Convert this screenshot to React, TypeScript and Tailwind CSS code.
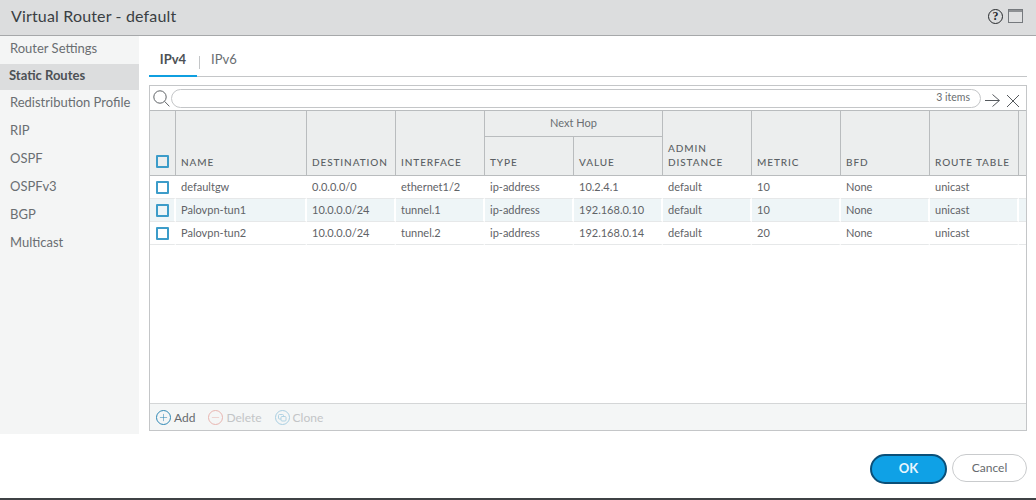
import { Plus, Minus } from "lucide-react";

const navItems = [
  "Router Settings",
  "Static Routes",
  "Redistribution Profile",
  "RIP",
  "OSPF",
  "OSPFv3",
  "BGP",
  "Multicast",
];

const routes = [
  { name: "defaultgw", dest: "0.0.0.0/0", iface: "ethernet1/2", value: "10.2.4.1", metric: "10" },
  { name: "Palovpn-tun1", dest: "10.0.0.0/24", iface: "tunnel.1", value: "192.168.0.10", metric: "10" },
  { name: "Palovpn-tun2", dest: "10.0.0.0/24", iface: "tunnel.2", value: "192.168.0.14", metric: "20" },
];

const th = "border-r border-b border-[#b9bcbe] bg-[#eceeee] px-[5px] pb-[6px] align-bottom text-left text-[10px] leading-[14px] font-medium tracking-[0.09em] text-[#5a5f63]";
const td = "border-r-2 border-b border-r-white border-b-[#e6e8e9] px-[5px] text-[11px] text-[#5f6367] whitespace-nowrap";

function Checkbox() {
  return <div className="mx-auto h-[13px] w-[13px] rounded-[1px] border-2 border-[#3c9cc9] bg-transparent" />;
}

function CircleIcon({ color, children }: { color: string; children: React.ReactNode }) {
  return (
    <span
      className="flex h-[15px] w-[15px] items-center justify-center rounded-full border"
      style={{ borderColor: color, color }}
    >
      {children}
    </span>
  );
}

export default function App() {
  return (
    <div className="flex h-[500px] w-[1036px] flex-col overflow-hidden bg-white font-['Lato','Open_Sans',sans-serif]">
      <header className="flex h-[36px] shrink-0 items-center justify-between border-b border-[#a6a8aa] bg-[#dcddde] pr-[13px] pb-[3px] pl-[11px]">
        <h1 className="text-[16px] tracking-[0.01em] text-[#3a3f43]">Virtual Router - default</h1>
        <div className="flex items-center gap-[5px]">
          <span className="flex h-[15px] w-[15px] items-center justify-center rounded-full border-[1.5px] border-[#26292c] font-['Liberation_Serif',serif] text-[12px] leading-none font-bold text-[#26292c]">
            ?
          </span>
          <svg width="15" height="14" viewBox="0 0 15 14" fill="none">
            <rect x="0.5" y="0.5" width="14" height="13" fill="#dfe0e1" stroke="#75797d" />
            <rect x="1" y="1" width="13" height="2" fill="#8e9194" />
          </svg>
        </div>
      </header>

      <div className="flex h-[398px] shrink-0">
        <nav className="flex w-[139px] shrink-0 flex-col bg-[#f4f5f5] text-[13px] text-[#6a6e72]">
          {navItems.map((item, idx) =>
            idx === 1 ? (
              <div key={item} className="flex h-[26px] items-center bg-[#dcddde] pb-[2px] pl-[9px] font-bold text-[#4d5155]">
                {item}
              </div>
            ) : (
              <div key={item} className="flex h-[28px] items-center pb-[2px] pl-[10px] whitespace-nowrap">
                {item}
              </div>
            ),
          )}
        </nav>

        <main className="flex min-w-0 flex-1 flex-col pt-[10px] pr-[9px] pl-[10px]">
          <div className="flex h-[31px] shrink-0 items-stretch border-b border-[#c4c6c8] text-[13px]">
            <div className="-mb-px flex w-[48px] items-center justify-center border-b-2 border-[#0f9fe0] pb-[2px] font-bold text-[#4d5155]">
              IPv4
            </div>
            <div className="mb-[7px] ml-[2px] h-[13px] w-px self-end bg-[#c4c6c8]" />
            <div className="flex items-center pb-[2px] pl-[11px] text-[#6a6e72]">IPv6</div>
          </div>

          <section className="mt-[8px] flex h-[346px] shrink-0 flex-col border border-[#c4c6c8]">
            <div className="flex h-[24px] shrink-0 items-center pl-[3px]">
              <svg width="17" height="17" viewBox="0 0 17 17" fill="none" stroke="#5f6367" strokeWidth="1">
                <circle cx="7" cy="7" r="6.2" />
                <path d="M11.6 11.4L16.4 16.4" />
              </svg>
              <div className="ml-[1px] flex h-[19px] w-[810px] items-center justify-end rounded-full border border-[#c4c6c8] pr-[10px] text-[10.5px] text-[#6a6e72]">
                3 items
              </div>
              <svg width="15" height="13" viewBox="0 0 15 13" fill="none" stroke="#55595d" strokeWidth="1" className="mt-[5px] ml-[4px]">
                <path d="M0 6.5H14.4M7.5 0.5L14.4 6.5L7.5 12.5" />
              </svg>
              <svg width="14" height="14" viewBox="0 0 14 14" fill="none" stroke="#55595d" strokeWidth="1" className="mt-[5px] ml-[6px]">
                <path d="M1 1L13 13M13 1L1 13" />
              </svg>
            </div>

            <div className="min-h-0 flex-1">
              <table className="w-full table-fixed border-separate border-spacing-0">
                <colgroup>
                  <col className="w-[26px]" />
                  <col className="w-[131px]" />
                  <col className="w-[89px]" />
                  <col className="w-[89px]" />
                  <col className="w-[89px]" />
                  <col className="w-[89px]" />
                  <col className="w-[89px]" />
                  <col className="w-[89px]" />
                  <col className="w-[89px]" />
                  <col className="w-[89px]" />
                  <col />
                </colgroup>
                <thead>
                  <tr className="h-[27px]">
                    <th rowSpan={2} className={`${th} border-t pb-[7px]`}>
                      <Checkbox />
                    </th>
                    <th rowSpan={2} className={`${th} border-t`}>NAME</th>
                    <th rowSpan={2} className={`${th} border-t`}>DESTINATION</th>
                    <th rowSpan={2} className={`${th} border-t`}>INTERFACE</th>
                    <th colSpan={2} className="border-t border-r border-b border-[#b9bcbe] bg-[#eceeee] text-center text-[11px] font-normal text-[#6a6e72]">
                      Next Hop
                    </th>
                    <th rowSpan={2} className={`${th} border-t`}>ADMIN<br />DISTANCE</th>
                    <th rowSpan={2} className={`${th} border-t`}>METRIC</th>
                    <th rowSpan={2} className={`${th} border-t`}>BFD</th>
                    <th rowSpan={2} className={`${th} border-t`}>ROUTE TABLE</th>
                    <th rowSpan={2} className="border-t border-b border-[#b9bcbe] bg-[#eceeee]" />
                  </tr>
                  <tr className="h-[39px]">
                    <th className={th}>TYPE</th>
                    <th className={th}>VALUE</th>
                  </tr>
                </thead>
                <tbody>
                  {routes.map((route, idx) => (
                    <tr key={route.name} className={idx === 1 ? "h-[23px] bg-[#eef5f7]" : "h-[23px]"}>
                      <td className={td}><Checkbox /></td>
                      <td className={td}>{route.name}</td>
                      <td className={td}>{route.dest}</td>
                      <td className={td}>{route.iface}</td>
                      <td className={td}>ip-address</td>
                      <td className={td}>{route.value}</td>
                      <td className={td}>default</td>
                      <td className={td}>{route.metric}</td>
                      <td className={td}>None</td>
                      <td className={td}>unicast</td>
                      <td className="border-b border-b-[#e6e8e9]" />
                    </tr>
                  ))}
                </tbody>
              </table>
            </div>

            <div className="flex h-[27px] shrink-0 items-center border-t border-[#d4d6d7] bg-[#f4f6f6] pt-[1px] pl-[6px] text-[12px]">
              <CircleIcon color="#2f88b5"><Plus size={11} strokeWidth={1.2} /></CircleIcon>
              <span className="ml-[3px] text-[#666a6e]">Add</span>
              <span className="ml-[13px]"><CircleIcon color="#e8b5b0"><Minus size={11} strokeWidth={1.2} /></CircleIcon></span>
              <span className="ml-[3px] text-[#c3c5c7]">Delete</span>
              <span className="ml-[13px]">
                <CircleIcon color="#a9cfe2">
                  <svg width="9" height="8" viewBox="0 0 9 8" fill="none" stroke="currentColor" strokeWidth="0.9">
                    <rect x="0.5" y="0.5" width="5" height="4.5" rx="1" />
                    <rect x="3" y="2.5" width="5" height="4.5" rx="1" fill="#f4f6f6" />
                  </svg>
                </CircleIcon>
              </span>
              <span className="ml-[3px] text-[#c3c5c7]">Clone</span>
            </div>
          </section>
        </main>
      </div>

      <footer className="flex flex-1 items-start justify-end gap-[5px] border-b-2 border-[#3f4245] pt-[20px] pr-[9px]">
        <button className="h-[30px] w-[77px] rounded-full border-2 border-[#0a4f78] bg-[#0fa1e6] text-[13px] font-bold text-[#e8f6fd]">
          OK
        </button>
        <button className="h-[28px] w-[75px] self-start rounded-full border border-[#c9cbcd] bg-white text-[12px] text-[#666a6e]">
          Cancel
        </button>
      </footer>
    </div>
  );
}
